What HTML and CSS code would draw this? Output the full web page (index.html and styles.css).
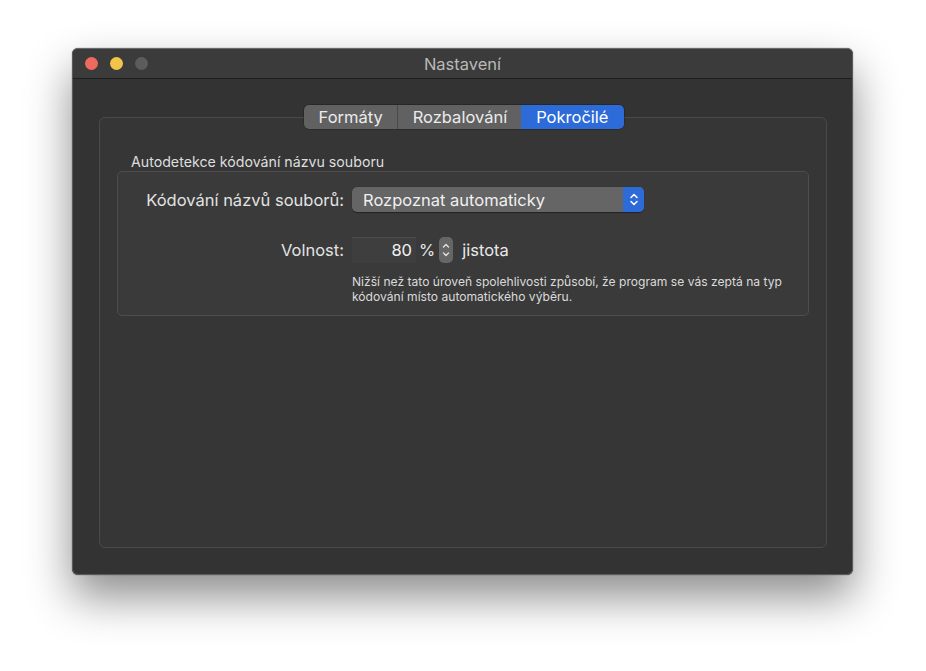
FILE: index.html
```html
<!DOCTYPE html>
<html lang="cs">
<head>
<meta charset="utf-8">
<title>Nastavení</title>
<link rel="stylesheet" href="styles.css">
</head>
<body>
<div class="window">
  <div class="titlebar">
    <div class="lights">
      <span class="light red"></span>
      <span class="light yellow"></span>
      <span class="light gray"></span>
    </div>
    <div class="title">Nastavení</div>
  </div>
  <div class="content">
    <div class="tabs">
      <span class="tab">Formáty</span>
      <span class="tab">Rozbalování</span>
      <span class="tab active">Pokročilé</span>
    </div>
    <div class="tabbox">
      <div class="group-label">Autodetekce kódování názvu souboru</div>
      <div class="group">
        <div class="form">
          <div class="label">Kódování názvů souborů:</div>
          <div class="popup">
            <span class="popup-text">Rozpoznat automaticky</span>
            <span class="popup-arrows">
              <svg width="10" height="15" viewBox="0 0 10 15"><path d="M2 5.5 L5 2.5 L8 5.5 M2 9.5 L5 12.5 L8 9.5" fill="none" stroke="#fff" stroke-width="1.5" stroke-linecap="round" stroke-linejoin="round"/></svg>
            </span>
          </div>
          <div class="label label2">Volnost:</div>
          <div class="row2">
            <div class="field">80</div>
            <span class="pct">%</span>
            <span class="stepper">
              <svg width="10" height="22" viewBox="0 0 10 22"><path d="M2.5 8 L5 5.5 L7.5 8 M2.5 14 L5 16.5 L7.5 14" fill="none" stroke="#e0e0e0" stroke-width="1.4" stroke-linecap="round" stroke-linejoin="round"/></svg>
            </span>
            <span class="unit">jistota</span>
          </div>
          <div></div>
          <div class="help">Nižší než tato úroveň spolehlivosti způsobí, že program se vás zeptá na typ kódování místo automatického výběru.</div>
        </div>
      </div>
    </div>
  </div>
</div>
</body>
</html>
```

FILE: styles.css
```css
html, body {
  margin: 0;
  padding: 0;
  background: #ffffff;
}
body {
  font-family: Inter, "Noto Sans", "Liberation Sans", sans-serif;
  padding: 48px 0 0 72px;
  height: 671px;
  box-sizing: border-box;
}
.window {
  width: 781px;
  height: 527px;
  box-sizing: border-box;
  background: #333333;
  border: 1px solid #5a5a5a;
  border-top-color: #6a6a6a;
  border-radius: 6px;
  box-shadow: 0 22px 45px rgba(0,0,0,0.45), 0 0 1px rgba(0,0,0,0.8);
  display: flex;
  flex-direction: column;
  overflow: hidden;
}
.titlebar {
  height: 29px;
  flex: none;
  background: #3b3b3b;
  border-bottom: 1px solid #1f1f1f;
  display: flex;
  align-items: center;
  position: relative;
}
.lights {
  display: flex;
  gap: 12px;
  padding-left: 12px;
}
.light {
  width: 13px;
  height: 13px;
  border-radius: 50%;
  display: block;
}
.red { background: #ee6a5f; }
.yellow { background: #f2c54a; }
.gray { background: #5c5c5c; }
.title {
  position: absolute;
  left: 0;
  right: 0;
  text-align: center;
  color: #b9b9b9;
  font-size: 16.5px;
}
.content {
  flex: 1;
  padding: 26px 25px 26px 26px;
  display: flex;
  flex-direction: column;
  align-items: center;
}
.tabs {
  display: flex;
  height: 24px;
  border-radius: 5px;
  overflow: hidden;
  margin-bottom: -12px;
  margin-left: 2px;
  position: relative;
  z-index: 1;
  box-shadow: 0 0 0 0.5px rgba(0,0,0,0.4);
}
.tab {
  background: #616161;
  color: #ececec;
  font-size: 16.5px;
  line-height: 24px;
  padding: 0 14px 0 15px;
  border-left: 1px solid #4a4a4a;
}
.tab:first-child { border-left: none; }
.tab.active {
  background: #2d6bd8;
  color: #ffffff;
  border-left: none;
  padding: 0 16px 0 15px;
}
.tabbox {
  align-self: stretch;
  flex: 1;
  background: #363636;
  border: 1px solid #4a4a4a;
  border-radius: 6px;
  padding: 35px 17px 0 17px;
}
.group-label {
  color: #dedede;
  font-size: 14.2px;
  line-height: 17px;
  padding-left: 14px;
  margin-bottom: 1px;
}
.group {
  background: #3a3a3a;
  border: 1px solid #4d4d4d;
  border-radius: 5px;
  height: 145px;
  box-sizing: border-box;
  padding: 15px 0 0 0;
}
.form {
  display: grid;
  grid-template-columns: 226px 1fr;
  column-gap: 8px;
  row-gap: 0;
  align-items: center;
}
.label {
  text-align: right;
  color: #e2e2e2;
  font-size: 16.5px;
}
.popup {
  width: 292px;
  height: 25px;
  background: #656565;
  border-radius: 5px;
  display: flex;
  align-items: center;
  justify-content: space-between;
  box-shadow: 0 0.5px 1px rgba(0,0,0,0.4);
}
.popup-text {
  color: #f0f0f0;
  font-size: 16.5px;
  padding-left: 11px;
}
.popup-arrows {
  width: 21px;
  height: 25px;
  background: #2d6bd8;
  border-radius: 0 5px 5px 0;
  display: flex;
  align-items: center;
  justify-content: center;
}
.label2 { margin-top: 25px; }
.row2 {
  display: flex;
  align-items: center;
  margin-top: 25px;
}
.field {
  width: 64px;
  height: 26px;
  box-sizing: border-box;
  background: #3e3e3e;
  border-top: 1px solid #4c4c4c;
  color: #f2f2f2;
  font-size: 16.5px;
  text-align: right;
  line-height: 25px;
  padding-right: 4px;
}
.pct {
  color: #e8e8e8;
  font-size: 16.5px;
  margin-left: 3px;
}
.stepper {
  width: 14px;
  height: 26px;
  margin-left: 4px;
  background: #666666;
  border-radius: 5px;
  display: flex;
  align-items: center;
  justify-content: center;
}
.unit {
  color: #e8e8e8;
  font-size: 16.5px;
  margin-left: 9px;
}
.help {
  grid-column: 2;
  color: #dadada;
  font-size: 12.1px;
  line-height: 15px;
  margin-top: 11px;
  padding-right: 6px;
}
```
